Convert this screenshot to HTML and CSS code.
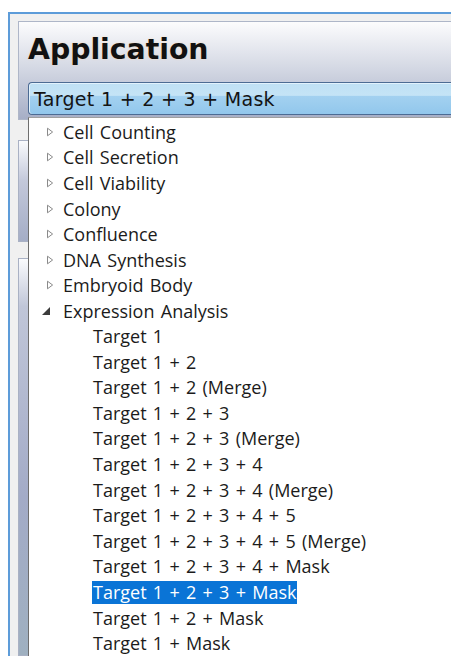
FILE: index.html
```html
<!DOCTYPE html>
<html lang="en">
<head>
<meta charset="utf-8">
<title>Application</title>
<link rel="stylesheet" href="styles.css">
</head>
<body>
<div class="window">
  <div class="header">
    <h1 class="title">Application</h1>
    <div class="combo"><span class="combo-text">Target 1 + 2 + 3 + Mask</span></div>
  </div>
  <div class="side-box upper"></div>
  <div class="side-box lower"></div>

  <ul class="dropdown">
    <li class="node"><svg class="exp" viewBox="0 0 8 10"><path d="M1.5 1.2 L6.6 5 L1.5 8.8 Z"/></svg><span>Cell Counting</span></li>
    <li class="node"><svg class="exp" viewBox="0 0 8 10"><path d="M1.5 1.2 L6.6 5 L1.5 8.8 Z"/></svg><span>Cell Secretion</span></li>
    <li class="node"><svg class="exp" viewBox="0 0 8 10"><path d="M1.5 1.2 L6.6 5 L1.5 8.8 Z"/></svg><span>Cell Viability</span></li>
    <li class="node"><svg class="exp" viewBox="0 0 8 10"><path d="M1.5 1.2 L6.6 5 L1.5 8.8 Z"/></svg><span>Colony</span></li>
    <li class="node"><svg class="exp" viewBox="0 0 8 10"><path d="M1.5 1.2 L6.6 5 L1.5 8.8 Z"/></svg><span>Confluence</span></li>
    <li class="node"><svg class="exp" viewBox="0 0 8 10"><path d="M1.5 1.2 L6.6 5 L1.5 8.8 Z"/></svg><span>DNA Synthesis</span></li>
    <li class="node"><svg class="exp" viewBox="0 0 8 10"><path d="M1.5 1.2 L6.6 5 L1.5 8.8 Z"/></svg><span>Embryoid Body</span></li>
    <li class="node open"><svg class="exp" viewBox="0 0 8 10"><path d="M0 9 L8 9 L8 1 Z"/></svg><span>Expression Analysis</span></li>
    <li class="leaf"><span>Target 1</span></li>
    <li class="leaf"><span>Target 1 + 2</span></li>
    <li class="leaf"><span>Target 1 + 2 (Merge)</span></li>
    <li class="leaf"><span>Target 1 + 2 + 3</span></li>
    <li class="leaf"><span>Target 1 + 2 + 3 (Merge)</span></li>
    <li class="leaf"><span>Target 1 + 2 + 3 + 4</span></li>
    <li class="leaf"><span>Target 1 + 2 + 3 + 4 (Merge)</span></li>
    <li class="leaf"><span>Target 1 + 2 + 3 + 4 + 5</span></li>
    <li class="leaf"><span>Target 1 + 2 + 3 + 4 + 5 (Merge)</span></li>
    <li class="leaf"><span>Target 1 + 2 + 3 + 4 + Mask</span></li>
    <li class="leaf selected"><span>Target 1 + 2 + 3 + Mask</span></li>
    <li class="leaf"><span>Target 1 + 2 + Mask</span></li>
    <li class="leaf"><span>Target 1 + Mask</span></li>
  </ul>
</div>
</body>
</html>
```

FILE: styles.css
```css
html, body {
  margin: 0;
  padding: 0;
  background: #ffffff;
  height: 656px;
  overflow: hidden;
}

.window {
  position: relative;
  margin: 12px 0 0 8px;
  height: 644px;
  box-sizing: border-box;
  border-top: 2px solid #5d9cd9;
  border-left: 2px solid #5d9cd9;
  background: #f0f0f0;
  padding: 7px 0 0 8px;
  overflow: hidden;
  display: flex;
  flex-direction: column;
}

/* title band with the analysis picker */
.header {
  height: 99px;
  box-sizing: border-box;
  border: 1px solid #aeb6c8;
  border-right: none;
  background: linear-gradient(#fcfcfd 0%, #d6dae5 45%, #a6aec6 100%);
  padding-left: 9px;
  flex: none;
}

.title {
  margin: 0;
  height: 60px;
  box-sizing: border-box;
  padding-top: 10px;
  font-family: "DejaVu Sans", Verdana, sans-serif;
  font-weight: bold;
  font-size: 28.3px;
  line-height: 36px;
  color: #111111;
  text-shadow: 0 0 2px rgba(255, 210, 150, 0.6);
}

.combo {
  height: 33px;
  box-sizing: border-box;
  border: 1px solid #4c6b93;
  border-right: none;
  border-radius: 4px 0 0 4px;
  background: linear-gradient(#bfe0f4 0%, #c5e4f6 40%, #a3d1f0 42%, #92c7ec 100%);
  box-shadow: inset 0 1px 0 #e2f2fc, inset 1px 0 0 #e2f2fc;
  padding-left: 5px;
  display: flex;
  align-items: center;
}

.combo-text {
  font-family: "DejaVu Sans", Verdana, sans-serif;
  font-size: 19px;
  letter-spacing: 0.3px;
  color: #141414;
  white-space: nowrap;
}

/* panels peeking out at the left edge behind the open list */
.side-box {
  width: 60px;
  box-sizing: border-box;
  border: 1px solid #a9b1c4;
  background: linear-gradient(#fafbfd 0%, #c3c8da 40%, #a4adc6 100%);
  flex: none;
}

.side-box.upper {
  margin-top: 20px;
  height: 102px;
}

.side-box.lower {
  margin-top: 16px;
  flex: 1;
  background: linear-gradient(#fafbfd 0%, #c0c6d8 12%, #a3abc7 60%, #9fb0c0 100%);
}

/* open drop-down tree */
.dropdown {
  position: absolute;
  left: 18px;
  top: 103px;
  right: 0;
  bottom: 0;
  margin: 0;
  padding: 1px 0 0 0;
  list-style: none;
  background: #ffffff;
  border-left: 1px solid #6e6e6e;
  border-top: 1px solid #a0a0a0;
  font-family: "Open Sans", "Noto Sans", sans-serif;
  font-size: 18px;
  word-spacing: 1.6px;
  color: #1b1b1b;
}

.dropdown li {
  height: 25.6px;
  display: flex;
  align-items: center;
  white-space: nowrap;
}

.node {
  padding-left: 17px;
}

.node .exp {
  width: 8px;
  height: 10px;
  margin-right: 9px;
  flex: none;
}

.node .exp path {
  fill: none;
  stroke: #8a8a8a;
  stroke-width: 1;
}

.node.open {
  padding-left: 13px;
}

.node.open .exp {
  margin-right: 13px;
}

.node.open .exp path {
  fill: #3c3c3c;
  stroke: none;
}

.leaf {
  padding-left: 63px;
}

.leaf span {
  padding: 0 1px;
  line-height: 23px;
}

.leaf.selected span {
  background: #0a74d6;
  color: #ffffff;
}
```
